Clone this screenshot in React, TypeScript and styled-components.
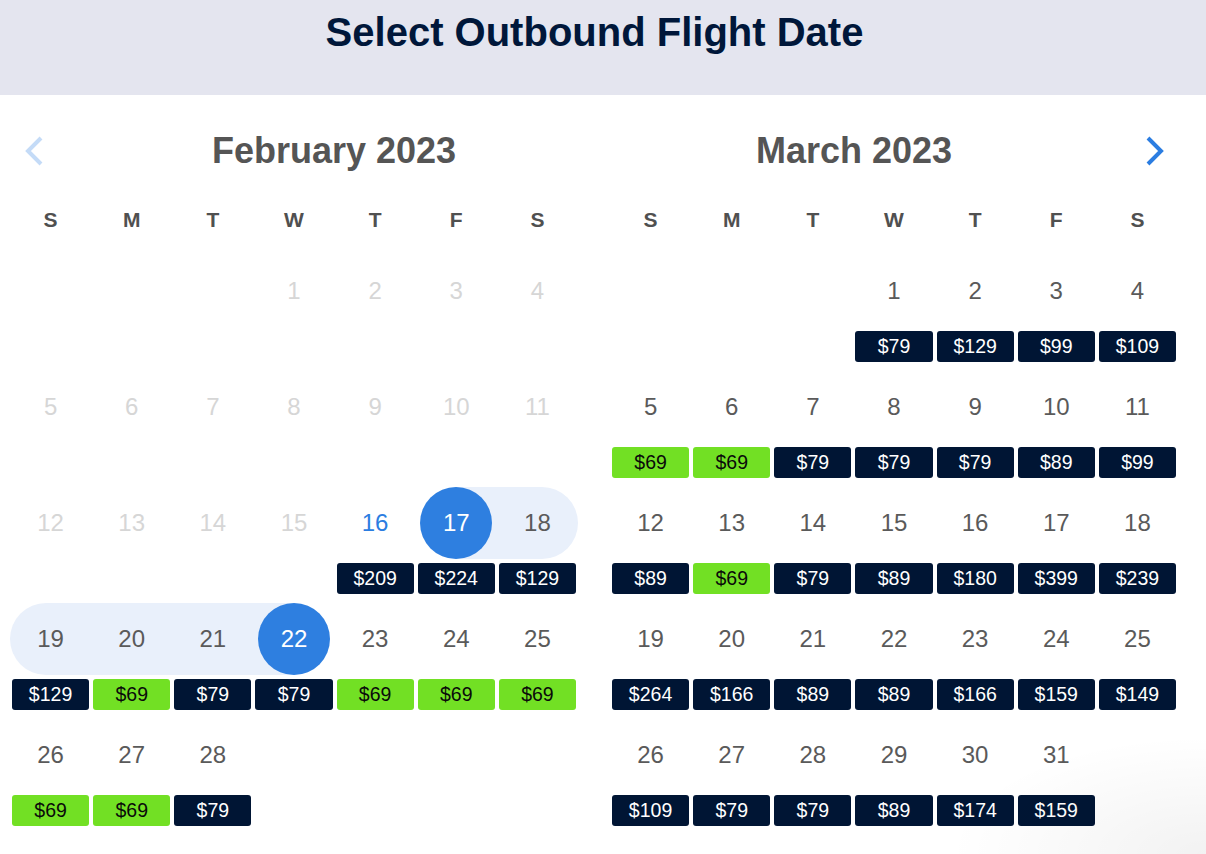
import React from "react";
import styled, { createGlobalStyle, css } from "styled-components";

const GlobalStyle = createGlobalStyle`
  html, body { margin: 0; padding: 0; background: #ffffff; }
  body { font-family: "Liberation Sans", Arial, Helvetica, sans-serif; }
`;

const Page = styled.div`
  width: 1206px;
  height: 854px;
  overflow: hidden;
  background: #ffffff;
  position: relative;
`;

const Header = styled.header`
  height: 95px;
  background: #e4e5ef;
  display: flex;
  justify-content: center;
  align-items: flex-start;
  padding: 10px 17px 0 0;
  box-sizing: border-box;
`;

const Title = styled.h1`
  margin: 0;
  font-size: 40px;
  line-height: 44px;
  font-weight: 700;
  color: #00173a;
`;

const Months = styled.div`
  display: flex;
  gap: 32px;
  padding-left: 10px;
`;

const Month = styled.section`
  width: 568px;
  display: flex;
  flex-direction: column;
`;

const MonthHeader = styled.div<{ $side: "left" | "right" }>`
  margin-top: 36px;
  height: 40px;
  display: grid;
  grid-template-columns: ${(p) => (p.$side === "left" ? "80px 1fr" : "1fr 80px")};
  align-items: center;
`;

const MonthTitle = styled.h2<{ $col: number }>`
  margin: 0;
  grid-column: ${(p) => p.$col};
  grid-row: 1;
  text-align: center;
  font-size: 36px;
  line-height: 40px;
  font-weight: 700;
  color: #555555;
`;

const NavButton = styled.button<{ $side: "left" | "right"; $disabled?: boolean }>`
  grid-row: 1;
  grid-column: ${(p) => (p.$side === "left" ? 1 : 2)};
  justify-self: ${(p) => (p.$side === "left" ? "start" : "end")};
  ${(p) => (p.$side === "left" ? "margin-left: 14px;" : "margin-right: 13px;")}
  width: 20px;
  height: 30px;
  padding: 0;
  border: none;
  background: none;
  display: flex;
  align-items: center;
  justify-content: center;
  color: ${(p) => (p.$disabled ? "#c4dbf7" : "#2b7de1")};
  cursor: pointer;
`;

const Weekdays = styled.div`
  margin-top: 37px;
  display: grid;
  grid-template-columns: repeat(7, 1fr);
  height: 24px;
`;

const Weekday = styled.div`
  text-align: center;
  font-size: 21px;
  line-height: 24px;
  font-weight: 700;
  color: #505050;
`;

const Grid = styled.div`
  margin-top: 23px;
  display: grid;
  grid-template-columns: repeat(7, 1fr);
`;

const Cell = styled.div`
  height: 116px;
  display: flex;
  flex-direction: column;
`;

type Band = "none" | "full" | "start" | "end";

const DayArea = styled.div<{ $band: Band; $rowStart: boolean; $rowEnd: boolean }>`
  height: 72px;
  display: flex;
  align-items: center;
  justify-content: center;
  ${(p) =>
    p.$band === "full" &&
    css`
      background: #e9f0fb;
    `}
  ${(p) =>
    p.$band === "start" &&
    css`
      background: linear-gradient(to right, transparent 50%, #e9f0fb 50%);
    `}
  ${(p) =>
    p.$band === "end" &&
    css`
      background: linear-gradient(to right, #e9f0fb 50%, transparent 50%);
    `}
  ${(p) =>
    p.$band !== "none" &&
    css`
      border-top-left-radius: ${p.$rowStart ? "36px" : "0"};
      border-bottom-left-radius: ${p.$rowStart ? "36px" : "0"};
      border-top-right-radius: ${p.$rowEnd ? "36px" : "0"};
      border-bottom-right-radius: ${p.$rowEnd ? "36px" : "0"};
    `}
`;

type DayState = "disabled" | "normal" | "today" | "selected";

const DayNumber = styled.span<{ $state: DayState }>`
  width: 72px;
  height: 72px;
  border-radius: 50%;
  display: flex;
  align-items: center;
  justify-content: center;
  font-size: 24px;
  line-height: 1;
  color: ${(p) =>
    p.$state === "disabled"
      ? "#d6d6d6"
      : p.$state === "today"
      ? "#2b7de1"
      : p.$state === "selected"
      ? "#ffffff"
      : "#5a5a5a"};
  background: ${(p) => (p.$state === "selected" ? "#2e7fe0" : "transparent")};
`;

const Price = styled.div<{ $cheap: boolean }>`
  margin: 4px 2px 0;
  height: 31px;
  border-radius: 3px;
  display: flex;
  align-items: center;
  justify-content: center;
  font-size: 19.5px;
  color: ${(p) => (p.$cheap ? "#0a0a0a" : "#ffffff")};
  background: ${(p) => (p.$cheap ? "#72e024" : "#001534")};
`;

const CornerShade = styled.div`
  position: absolute;
  right: 0;
  bottom: 0;
  width: 260px;
  height: 120px;
  pointer-events: none;
  background: radial-gradient(ellipse at 100% 100%, rgba(0, 0, 0, 0.05), rgba(0, 0, 0, 0) 70%);
`;

const Chevron = ({ dir }: { dir: "left" | "right" }) => (
  <svg width="20" height="30" viewBox="0 0 20 30" fill="none">
    <path
      d={dir === "left" ? "M17 2 L4 15 L17 28" : "M3 2 L16 15 L3 28"}
      stroke="currentColor"
      strokeWidth="4"
      strokeLinecap="butt"
      strokeLinejoin="miter"
    />
  </svg>
);

type DayInfo = {
  day: number;
  state: DayState;
  price?: number;
  cheap?: boolean;
  band?: Band;
};

type MonthData = {
  name: string;
  startWeekday: number;
  days: DayInfo[];
};

const isCheap = (v: number) => v === 69;

const febPrices: Record<number, number> = {
  16: 209, 17: 224, 18: 129, 19: 129, 20: 69, 21: 79, 22: 79, 23: 69, 24: 69, 25: 69, 26: 69, 27: 69, 28: 79,
};

const marPrices: Record<number, number> = {
  1: 79, 2: 129, 3: 99, 4: 109, 5: 69, 6: 69, 7: 79, 8: 79, 9: 79, 10: 89, 11: 99,
  12: 89, 13: 69, 14: 79, 15: 89, 16: 180, 17: 399, 18: 239, 19: 264, 20: 166, 21: 89,
  22: 89, 23: 166, 24: 159, 25: 149, 26: 109, 27: 79, 28: 79, 29: 89, 30: 174, 31: 159,
};

const february: MonthData = {
  name: "February 2023",
  startWeekday: 3,
  days: Array.from({ length: 28 }, (_, i) => {
    const d = i + 1;
    let state: DayState = "normal";
    if (d < 16) state = "disabled";
    else if (d === 16) state = "today";
    else if (d === 17 || d === 22) state = "selected";
    let band: Band = "none";
    if (d === 17) band = "start";
    else if (d === 22) band = "end";
    else if (d > 17 && d < 22) band = "full";
    const price = febPrices[d];
    return { day: d, state, price, cheap: price ? isCheap(price) : false, band };
  }),
};

const march: MonthData = {
  name: "March 2023",
  startWeekday: 3,
  days: Array.from({ length: 31 }, (_, i) => {
    const d = i + 1;
    const price = marPrices[d];
    return { day: d, state: "normal" as DayState, price, cheap: isCheap(price), band: "none" as Band };
  }),
};

const WEEKDAYS = ["S", "M", "T", "W", "T", "F", "S"];

const MonthView = ({ data, side }: { data: MonthData; side: "left" | "right" }) => {
  const blanks = Array.from({ length: data.startWeekday });
  return (
    <Month>
      <MonthHeader $side={side}>
        {side === "left" && (
          <NavButton $side="left" $disabled aria-label="Previous month">
            <Chevron dir="left" />
          </NavButton>
        )}
        <MonthTitle $col={side === "left" ? 2 : 1}>{data.name}</MonthTitle>
        {side === "right" && (
          <NavButton $side="right" aria-label="Next month">
            <Chevron dir="right" />
          </NavButton>
        )}
      </MonthHeader>
      <Weekdays>
        {WEEKDAYS.map((w, i) => (
          <Weekday key={i}>{w}</Weekday>
        ))}
      </Weekdays>
      <Grid>
        {blanks.map((_, i) => (
          <Cell key={`b${i}`} />
        ))}
        {data.days.map((d) => {
          const col = (data.startWeekday + d.day - 1) % 7;
          return (
            <Cell key={d.day}>
              <DayArea $band={d.band ?? "none"} $rowStart={col === 0} $rowEnd={col === 6}>
                <DayNumber $state={d.state}>{d.day}</DayNumber>
              </DayArea>
              {d.price !== undefined && d.state !== "disabled" && (
                <Price $cheap={!!d.cheap}>${d.price}</Price>
              )}
            </Cell>
          );
        })}
      </Grid>
    </Month>
  );
};

export default function App() {
  return (
    <>
      <GlobalStyle />
      <Page>
        <Header>
          <Title>Select Outbound Flight Date</Title>
        </Header>
        <Months>
          <MonthView data={february} side="left" />
          <MonthView data={march} side="right" />
        </Months>
        <CornerShade />
      </Page>
    </>
  );
}
